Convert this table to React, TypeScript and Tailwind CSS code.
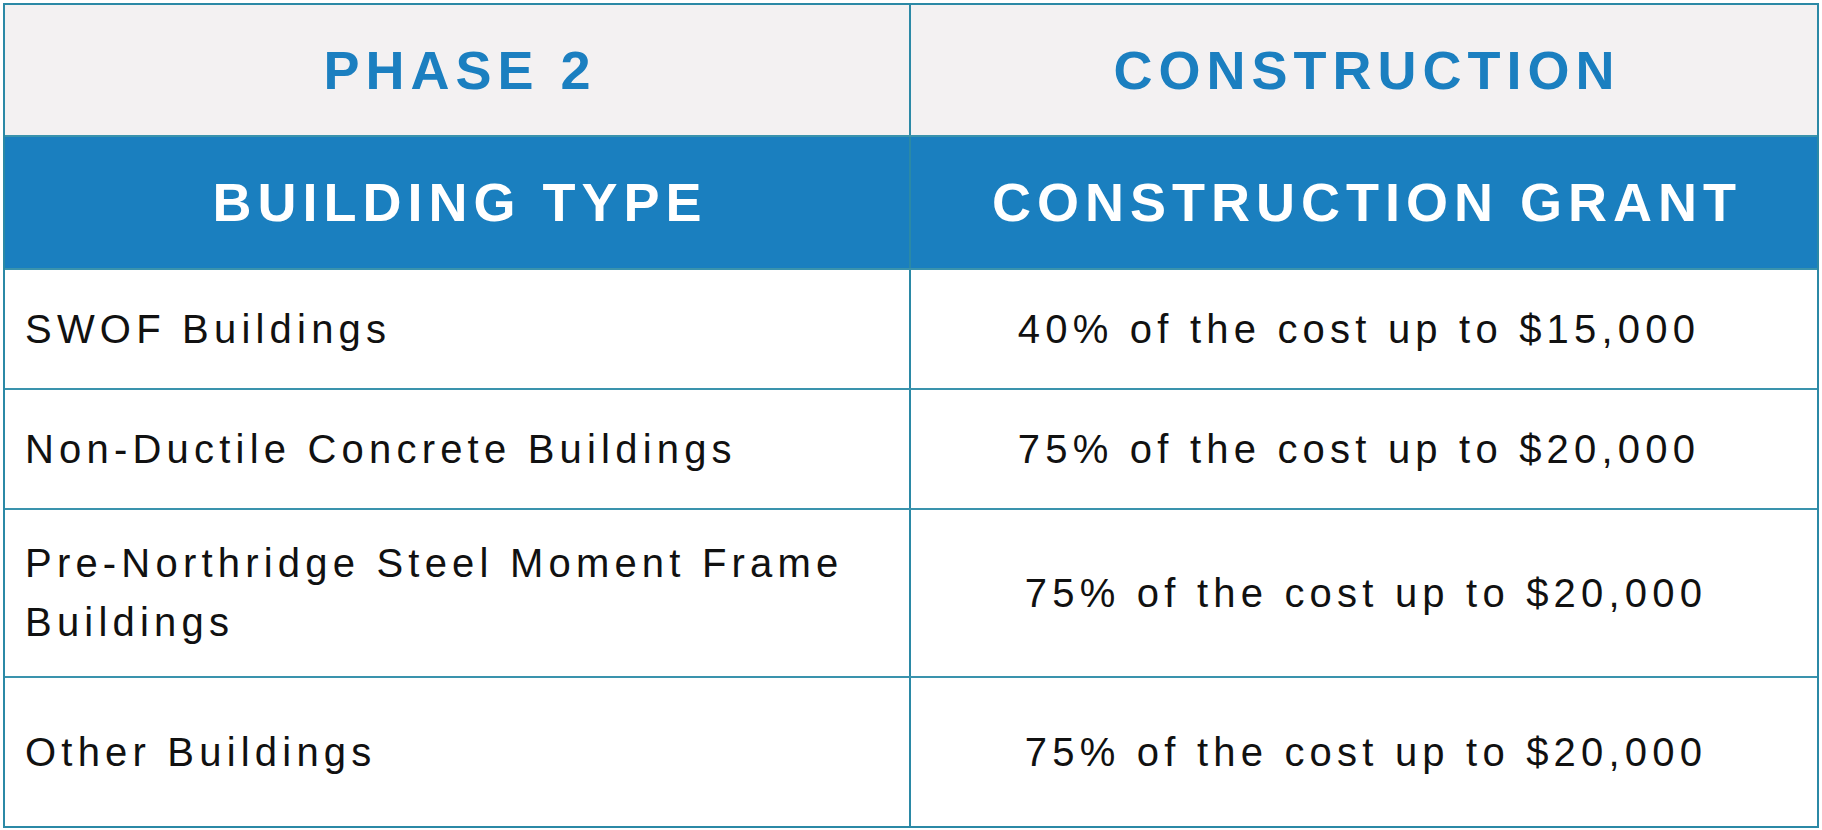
const rows = [
  { type: "SWOF Buildings", grant: "40% of the cost up to $15,000", h: "h-[120px]", shift: "pr-[10px]" },
  { type: "Non-Ductile Concrete Buildings", grant: "75% of the cost up to $20,000", h: "h-[120px]", shift: "pr-[10px]" },
  { type: "Pre-Northridge Steel Moment Frame Buildings", grant: "75% of the cost up to $20,000", h: "h-[168px]", shift: "pl-[4px]" },
  { type: "Other Buildings", grant: "75% of the cost up to $20,000", h: "h-[148px]", shift: "pl-[4px]", last: true },
];

export default function App() {
  return (
    <div className="min-h-screen bg-white p-[3px] font-['Liberation_Sans',Arial,sans-serif]">
      <div className="border-2 border-[#2b89a6]">
        {/* phase row */}
        <div className="grid h-[132px] grid-cols-[906px_1fr] border-b-2 border-[#3a93ad] bg-[#f3f1f2]">
          <div className="flex items-center justify-center border-r-2 border-[#2b89a6] pl-[6px] text-[54px] font-bold tracking-[6px] text-[#1b7fc0]">
            PHASE 2
          </div>
          <div className="flex items-center justify-center pl-[6px] text-[54px] font-bold tracking-[6px] text-[#1b7fc0]">
            CONSTRUCTION
          </div>
        </div>

        {/* column headings */}
        <div className="grid h-[133px] grid-cols-[906px_1fr] border-b-2 border-[#3a93ad] bg-[#1a7fbf]">
          <div className="flex items-center justify-center border-r-2 border-[#2b89a6] pl-[6px] text-[54px] font-bold tracking-[6px] text-white">
            BUILDING TYPE
          </div>
          <div className="flex items-center justify-center pl-[6px] text-[54px] font-bold tracking-[6px] text-white">
            CONSTRUCTION GRANT
          </div>
        </div>

        {rows.map((r) => (
          <div
            key={r.type}
            className={`grid grid-cols-[906px_1fr] ${r.h} ${r.last ? "" : "border-b-2 border-[#3a93ad]"}`}
          >
            <div className="flex items-center border-r-2 border-[#2b89a6] pl-[20px] pr-[30px] text-[40px] leading-[59px] tracking-[5.2px] text-[#111]">
              {r.type}
            </div>
            <div className={`flex items-center justify-center ${r.shift} text-[40px] leading-[59px] tracking-[5.2px] text-[#111]`}>
              {r.grant}
            </div>
          </div>
        ))}
      </div>
    </div>
  );
}
